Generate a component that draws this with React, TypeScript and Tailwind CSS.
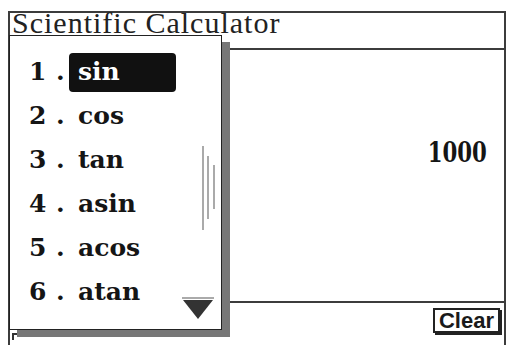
import React from 'react';

const FUNCS = ['sin', 'cos', 'tan', 'asin', 'acos', 'atan'];

function FuncMenu() {
  return (
    <div className="absolute left-[9px] top-[35px] z-10 h-[295px] w-[213px] border border-[#222] bg-white shadow-[8px_7px_0_#777]">
      <ul className="pt-[14px] font-['DejaVu_Serif',serif] text-[25px] font-bold text-[#151515]">
        {FUNCS.map((f, i) => (
          <li key={f} className="flex h-[44px] items-center pl-[19px]">
            <span className="w-[27px]">{i + 1}</span>
            <span className="w-[13px]">.</span>
            <span
              className={`flex h-[39px] w-[107px] items-center rounded-[4px] pl-[9px] ${i === 0 ? 'bg-[#111] text-white' : ''}`}
            >
              {f}
            </span>
          </li>
        ))}
      </ul>

      {/* scroll indicator */}
      <div className="absolute left-[192px] top-[110px] h-[84px] w-[2px] bg-[#aaa]" />
      <div className="absolute left-[197px] top-[120px] h-[63px] w-[2px] bg-[#aaa]" />
      <div className="absolute left-[203px] top-[129px] h-[44px] w-[2px] bg-[#aaa]" />

      {/* scroll down arrow */}
      <div className="absolute left-[172px] top-[261px] flex w-[32px] flex-col items-center">
        <div className="h-[2px] w-[32px] bg-[#aaa]" />
        <svg width="30" height="19" viewBox="0 0 30 19" className="mt-[1px]">
          <polygon points="0,0 30,0 15,19" fill="#333" />
        </svg>
      </div>
    </div>
  );
}

export default function App() {
  return (
    <div className="relative h-[345px] w-[510px] overflow-hidden bg-white">
      <div className="ml-[8px] mt-[11px] flex h-[334px] w-[498px] flex-col border-x-2 border-t-2 border-[#3c3c3c]">
        <div className="h-[37px] shrink-0 border-b-2 border-[#3c3c3c] pl-[2px]">
          <span className="whitespace-nowrap font-['Liberation_Serif',serif] text-[30px] leading-[20px] tracking-[1px] text-[#222]">
            Scientific Calculator
          </span>
        </div>

        <div className="h-[253px] shrink-0 border-b-2 border-[#3c3c3c] pr-[17px] pt-[89px] text-right">
          <span className="inline-block origin-right scale-x-[0.76] font-['DejaVu_Serif',serif] text-[28px] font-bold leading-none text-[#151515]">
            1000
          </span>
        </div>

        <div className="flex items-start justify-between">
          <div className="ml-[2px] mt-[30px] h-[7px] w-[8px] border-l-2 border-t-2 border-[#333]" />
          <button className="mr-[4px] mt-[5px] flex h-[25px] w-[67px] items-center justify-center border-2 border-[#222] bg-white font-['Liberation_Sans',sans-serif] text-[22px] font-bold leading-none text-[#1a1a1a] shadow-[2px_2px_0_#222]">
            Clear
          </button>
        </div>
      </div>

      <FuncMenu />
    </div>
  );
}
